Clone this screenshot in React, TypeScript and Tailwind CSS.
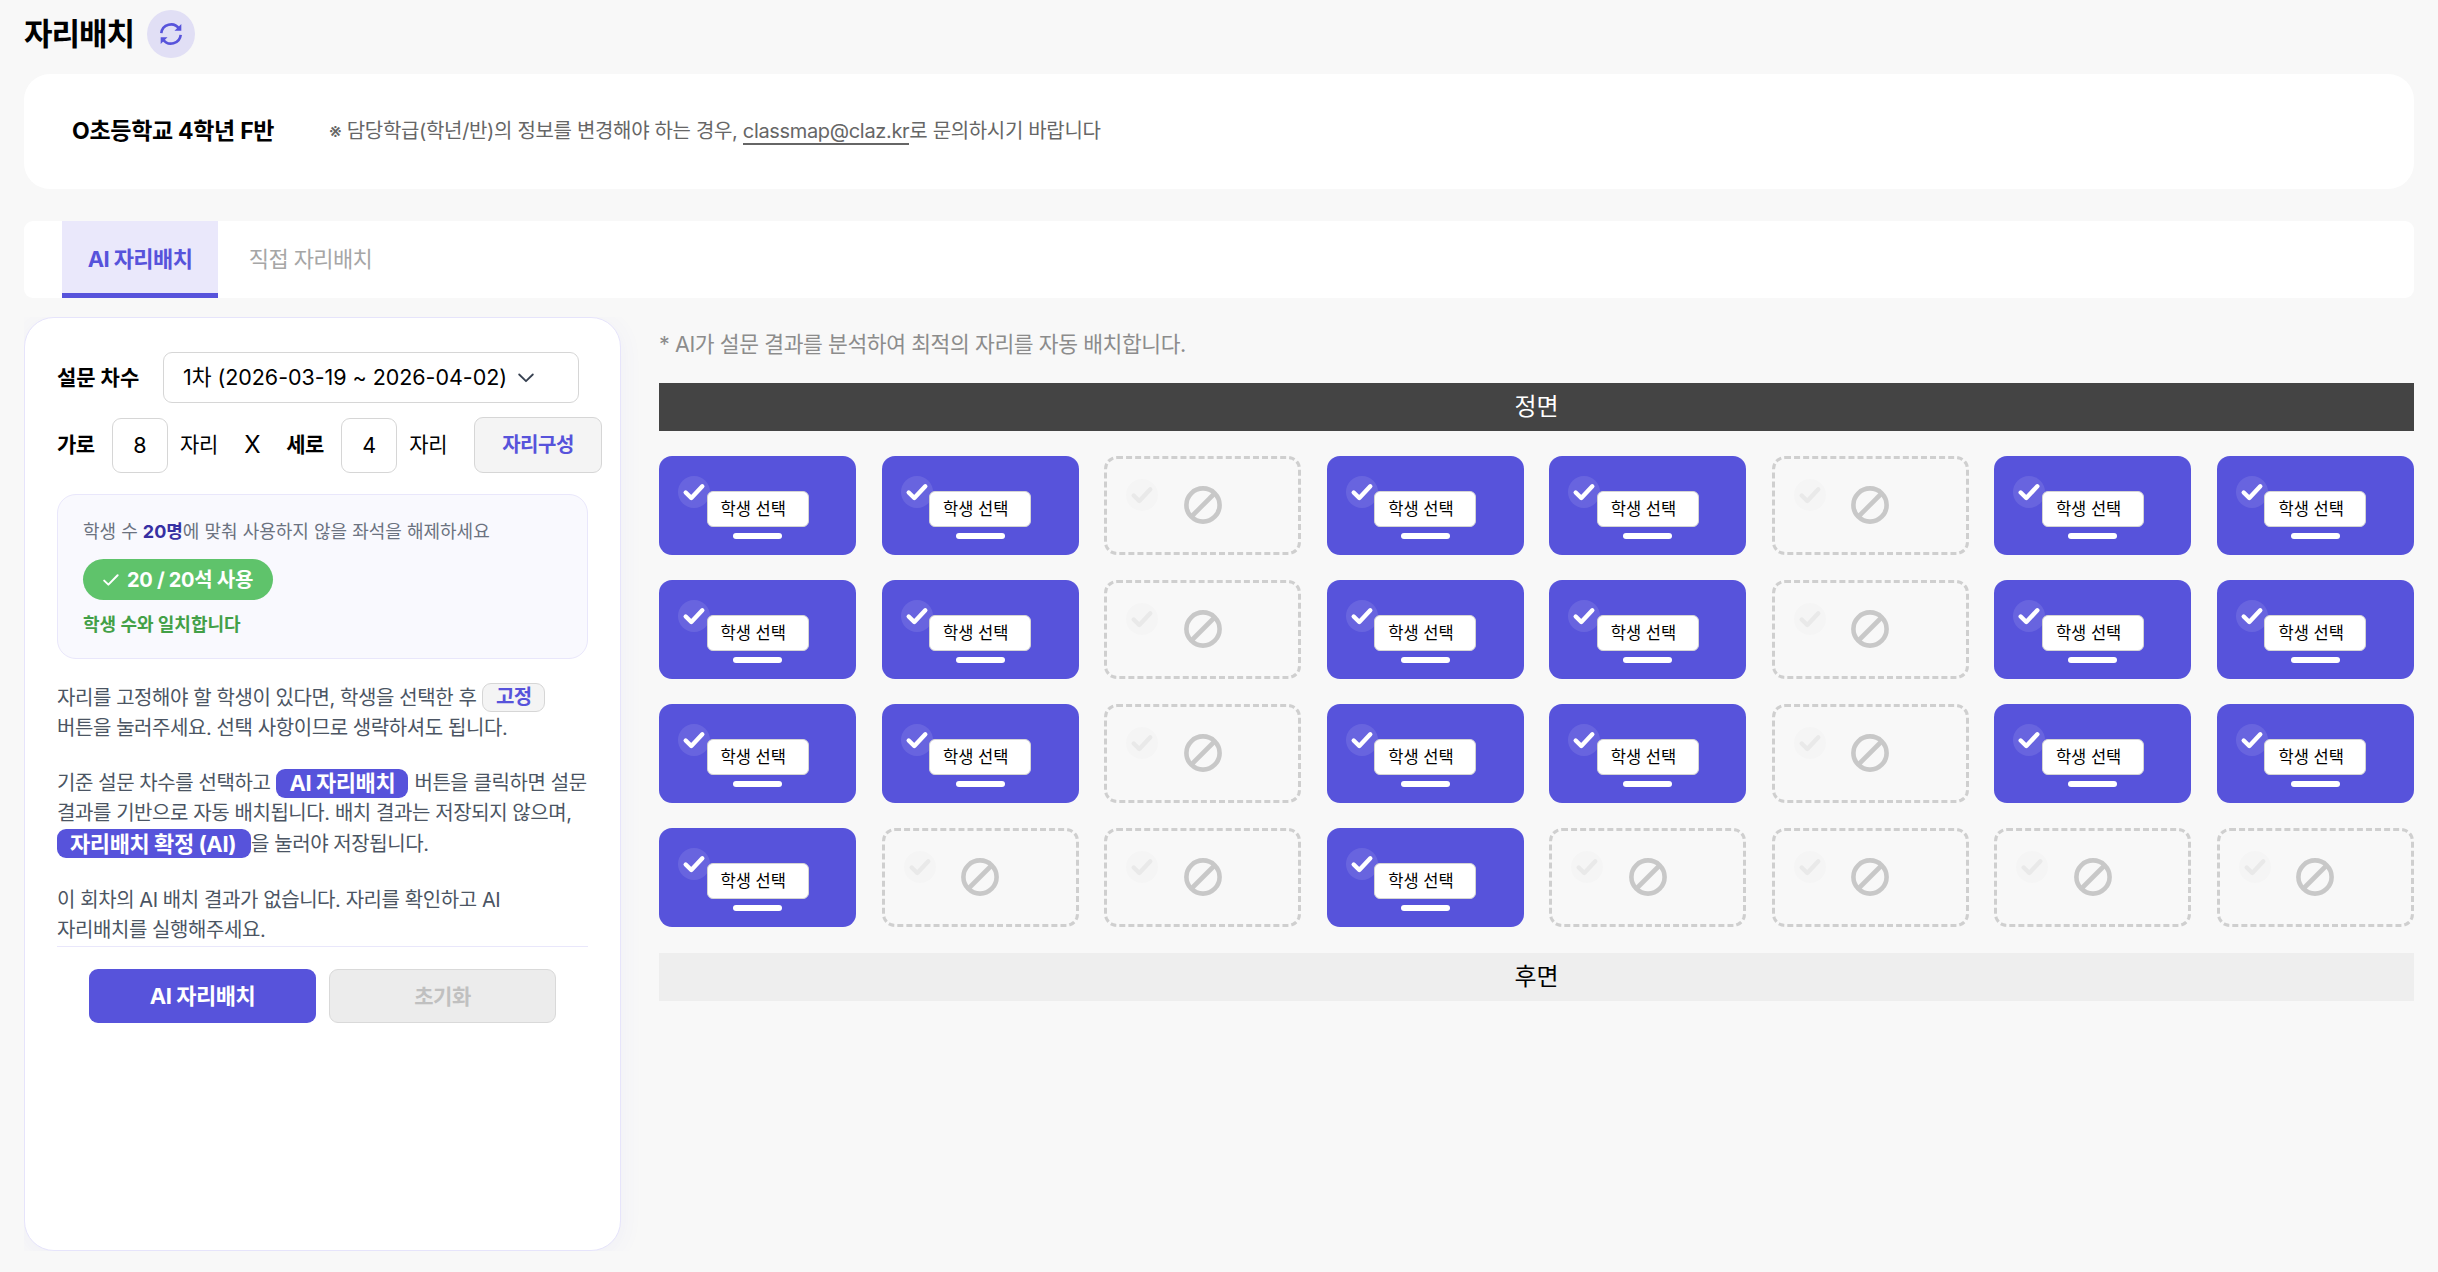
import clsx from 'clsx';

const COLS = 8;
const ROWS = 4;

// 1 = seat in use, 0 = seat left out
const seatMap = [
  [1, 1, 0, 1, 1, 0, 1, 1],
  [1, 1, 0, 1, 1, 0, 1, 1],
  [1, 1, 0, 1, 1, 0, 1, 1],
  [1, 0, 0, 1, 0, 0, 0, 0],
];

function CheckMark({ className }: { className?: string }) {
  return (
    <svg
      viewBox="0 0 24 20"
      fill="none"
      stroke="currentColor"
      strokeWidth="4.4"
      strokeLinecap="round"
      strokeLinejoin="round"
      className={className}
    >
      <path d="M3.7 10.5 9.3 16 20.3 4.3" />
    </svg>
  );
}

function RefreshIcon() {
  return (
    <svg viewBox="0 0 24 24" className="h-6 w-6" fill="none" stroke="#5753db" strokeWidth="2.6">
      <path d="M2.3 11.2A9.8 9.8 0 0 1 20 6.5" />
      <path d="M21.7 12.8A9.8 9.8 0 0 1 4 17.5" />
      <path d="M22.3 2v6.8h-6.8z" fill="#5753db" stroke="none" />
      <path d="M1.7 22v-6.8h6.8z" fill="#5753db" stroke="none" />
    </svg>
  );
}

function Seat({ used }: { used: boolean }) {
  if (!used) {
    return (
      <div className="relative flex h-[99px] items-center justify-center rounded-[13px] border-3 border-dashed border-[#cfcfcf]">
        <span className="absolute left-[19px] top-5 flex h-8 w-8 items-center justify-center rounded-full bg-[#f5f5f5] text-[#e9e9e9]">
          <CheckMark className="h-5 w-6" />
        </span>
        <svg viewBox="0 0 38 38" className="mb-px h-[38px] w-[38px]" fill="none" stroke="#c8c8c8" strokeWidth="4.6">
          <circle cx="19" cy="19" r="16.6" />
          <path d="M7.5 30.5 30.5 7.5" />
        </svg>
      </div>
    );
  }

  return (
    <div className="relative flex h-[99px] flex-col items-center rounded-[13px] bg-[#5753db] pt-[35px]">
      <span className="absolute left-[19px] top-5 flex h-8 w-8 items-center justify-center rounded-full bg-white/10 text-white">
        <CheckMark className="h-5 w-6" />
      </span>
      <div className="relative flex h-9 w-[102px] items-center rounded-[6px] border border-[#d4d4d4] bg-white pl-[13px] text-[16.5px] text-black">
        학생 선택
      </div>
      <div className="mt-1.5 h-1.5 w-[49px] rounded-[3px] bg-white" />
    </div>
  );
}

function NumberField({ label, value }: { label: string; value: number }) {
  return (
    <div className="flex items-center">
      <span className="w-[55px] text-[21px] font-bold tracking-[-0.5px]">{label}</span>
      <span className="flex h-[55px] w-14 items-center justify-center rounded-[9px] border border-[#d6d6d6] text-[21.5px]">
        {value}
      </span>
      <span className="ml-3 text-[21px] tracking-[-0.2px]">자리</span>
    </div>
  );
}

function SidePanel() {
  return (
    <aside className="h-[934px] w-[597px] shrink-0 rounded-[30px] border border-[#e6e4fb] bg-white pl-8 pt-[34px] shadow-[0_4px_24px_rgba(87,83,219,0.06)]">
      <div className="flex items-center">
        <span className="w-[106px] whitespace-nowrap text-[21px] font-bold">설문 차수</span>
        <div className="flex h-[51px] w-[416px] items-center rounded-[9px] border border-[#d6d6d6] pl-[19px] text-[21.5px]">
          <span className="w-[335px] whitespace-nowrap tracking-[-0.05px]">1차 (2026-03-19 ~ 2026-04-02)</span>
          <svg viewBox="0 0 16 10" className="h-2.5 w-4" fill="none" stroke="#374151" strokeWidth="1.8" strokeLinecap="round" strokeLinejoin="round">
            <path d="M1.2 1.5 8 8.2 14.8 1.5" />
          </svg>
        </div>
      </div>

      <div className="mt-3.5 flex w-[545px] items-center">
        <NumberField label="가로" value={8} />
        <span className="ml-[26px] w-[42px] text-[24px]">X</span>
        <NumberField label="세로" value={4} />
        <button className="ml-auto h-14 w-32 rounded-[9px] border border-[#d6d6d6] bg-[#f4f4f4] text-[20px] font-bold tracking-[-0.5px] text-[#5753db]">
          자리구성
        </button>
      </div>

      <section className="mt-[21px] flex h-[165px] w-[531px] flex-col items-start rounded-[19px] border border-[#e9e7fb] bg-[#f9f9fe] pl-[25px] pt-[23px]">
        <p className="text-[18px] leading-7 text-[#6b7280]">
          학생 수 <b className="text-[#3730a3]">20명</b>에 맞춰 사용하지 않을 좌석을 해제하세요
        </p>
        <div className="mt-[13px] flex h-[41px] w-[190px] items-center rounded-full bg-[#5fc36b] pl-5 text-[20px] font-bold text-white">
          <svg viewBox="0 0 16 12" className="mr-2 h-3 w-4" fill="none" stroke="currentColor" strokeWidth="2" strokeLinecap="round" strokeLinejoin="round">
            <path d="M1.2 6.6 5.4 10.6 14.6 1.3" />
          </svg>
          <span className="whitespace-nowrap tracking-[-0.3px]">20 / 20석 사용</span>
        </div>
        <p className="mt-[11px] text-[18px] font-bold leading-7 text-[#43a047]">학생 수와 일치합니다</p>
      </section>

      <div className="h-[288px] w-[531px] whitespace-nowrap border-b border-[#e9e7fb] pt-6 text-[20px] leading-[30px] tracking-[-0.42px] text-[#4b5563]">
        <div>
          <div className="flex items-center">
            자리를 고정해야 할 학생이 있다면, 학생을 선택한 후
            <span className="-mt-0.5 ml-1.5 flex h-[29px] w-[63px] items-center justify-center rounded-[9px] border border-[#d6d6d6] bg-[#f4f4f4] font-bold text-[#5753db]">
              고정
            </span>
          </div>
          <div>버튼을 눌러주세요. 선택 사항이므로 생략하셔도 됩니다.</div>
        </div>
        <div className="mt-[25px]">
          <div className="flex items-center">
            기준 설문 차수를 선택하고
            <span className="mx-1.5 flex h-[29px] w-[132px] items-center rounded-[9px] bg-[#5753db] pl-[13px] text-[22px] font-bold text-white">
              AI 자리배치
            </span>
            버튼을 클릭하면 설문
          </div>
          <div>결과를 기반으로 자동 배치됩니다. 배치 결과는 저장되지 않으며,</div>
          <div className="flex h-[31px] items-center">
            <span className="flex h-[29px] w-[194px] items-center rounded-[9px] bg-[#5753db] pl-[13px] text-[22px] font-bold text-white">
              자리배치 확정 (AI)
            </span>
            을 눌러야 저장됩니다.
          </div>
        </div>
        <div className="mt-[26px]">
          <div>이 회차의 AI 배치 결과가 없습니다. 자리를 확인하고 AI</div>
          <div>자리배치를 실행해주세요.</div>
        </div>
      </div>

      <div className="mt-[22px] flex gap-[13px] pl-8 text-[22px] font-bold tracking-[-0.45px]">
        <button className="h-[54px] w-[227px] rounded-[9px] bg-[#5753db] pt-px text-white">AI 자리배치</button>
        <button className="h-[54px] w-[227px] rounded-[9px] border border-[#d9d9d9] bg-[#ececec] pt-px text-[21px] text-[#c0c0c0]">
          초기화
        </button>
      </div>
    </aside>
  );
}

function SeatBoard() {
  return (
    <section className="ml-[38px] flex-1">
      <p className="pt-3 text-[21.5px] leading-[30px] tracking-[-0.4px] text-[#8c8c8c]">
        * AI가 설문 결과를 분석하여 최적의 자리를 자동 배치합니다.
      </p>
      <div className="mt-6 flex h-12 items-center justify-center bg-[#444444] text-[24px] text-white">정면</div>
      <div className="mt-[25px] grid grid-cols-8 gap-x-[25.5px] gap-y-[25px]">
        {Array.from({ length: ROWS * COLS }, (_, i) => (
          <Seat key={i} used={seatMap[Math.floor(i / COLS)][i % COLS] === 1} />
        ))}
      </div>
      <div className="mt-[26px] flex h-12 items-center justify-center bg-[#eeeeee] text-[24px] text-black">후면</div>
    </section>
  );
}

const tabs = [
  { label: 'AI 자리배치', active: true },
  { label: '직접 자리배치', active: false },
];

export default function App() {
  return (
    <div className="h-[1272px] w-full overflow-hidden bg-[#f8f8f8] px-6 pt-2.5 font-['Inter','Noto_Sans_CJK_KR',sans-serif] text-black">
      <header className="flex h-12 items-center">
        <h1 className="w-[123px] whitespace-nowrap pb-0.5 text-[31px] font-bold leading-none tracking-[-1px]">자리배치</h1>
        <button className="flex h-12 w-12 items-center justify-center rounded-full bg-[#e1dff5]">
          <RefreshIcon />
        </button>
      </header>

      <div className="mt-4 flex h-[115px] items-center rounded-[26px] bg-white pl-12">
        <span className="w-[257px] whitespace-nowrap text-[23px] font-bold tracking-[-0.3px]">O초등학교 4학년 F반</span>
        <p className="whitespace-nowrap pb-px text-[20px] tracking-[-0.33px] text-[#666666]">
          ※ 담당학급(학년/반)의 정보를 변경해야 하는 경우,{' '}
          <a className="border-b-2 border-[#666666]">classmap@claz.kr</a>로 문의하시기 바랍니다
        </p>
      </div>

      <nav className="mt-8 flex h-[77px] rounded-[9px] bg-white pl-[38px]">
        {tabs.map((tab) => (
          <button
            key={tab.label}
            className={clsx(
              'h-full whitespace-nowrap border-b-5 pt-[5px] text-[22px] tracking-[-0.6px]',
              tab.active
                ? 'w-[156px] border-[#5753db] bg-[#eae8fb] font-bold text-[#5753db]'
                : 'w-[185px] border-transparent text-[#a6a6a6]',
            )}
          >
            {tab.label}
          </button>
        ))}
      </nav>

      <main className="mt-[19px] flex overflow-hidden">
        <SidePanel />
        <SeatBoard />
      </main>
    </div>
  );
}
